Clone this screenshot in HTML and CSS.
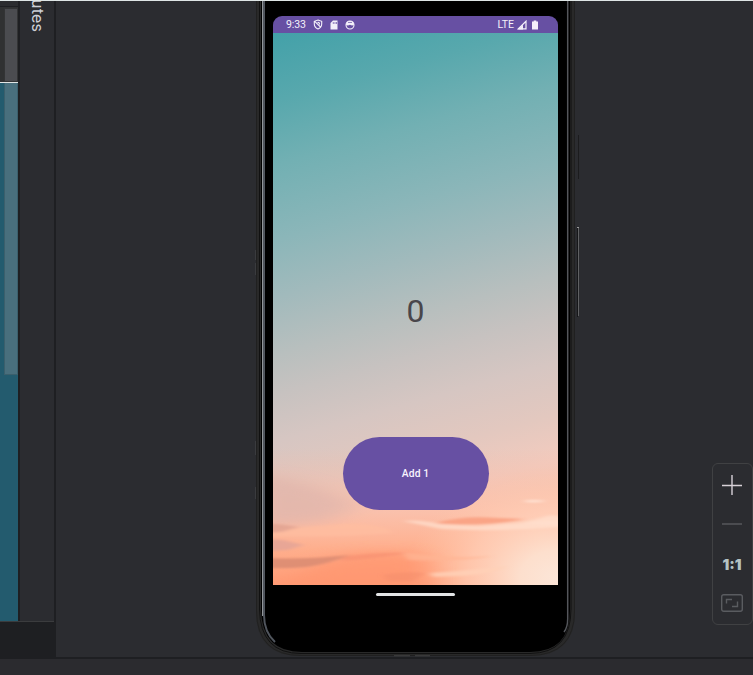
FILE: index.html
```html
<!DOCTYPE html>
<html lang="en">
<head>
<meta charset="utf-8">
<title>Layout preview</title>
<link rel="stylesheet" href="styles.css">
</head>
<body>
<div class="workspace">
  <aside class="side">
    <div class="side-panels">
      <div class="editor">
        <div class="scrollbar"></div>
      </div>
      <div class="tab-strip"><span class="tab-label">utes</span></div>
    </div>
    <div class="side-footer"></div>
  </aside>
  <main class="canvas">
    <section class="phone">
      <svg class="frame" width="328" height="658" viewBox="252 0 328 658" fill="none">
        <path d="M256 0V610Q256 655 301 655H530Q575 655 575 610V0Z" fill="#292929"/>
        <path d="M256.500 0V610Q257 654.500 301 654.500H530Q574.500 654 574.500 610V0" stroke="#202020"/>
        <path d="M259.500 0V608Q260 652.500 301 652.500H530Q571 652 571 608V0" stroke="#111"/>
        <path d="M261 0V609Q262 651 302 651H530Q570 651 570 609V0Z" fill="#000"/>
        <path d="M262.500 0V615" stroke="#92969a"/>
        <path d="M264 0V614Q264 631 275 641" stroke="#50555d" stroke-width="2"/>
        <path d="M567.700 0V616Q568 626 564 631" stroke="#54565b" stroke-width="1.500"/>
        <path d="M255.500 249V259M255.500 262V274M255.500 440V454M255.500 486V498" stroke="#3a3b3e"/>
        <path d="M578.500 134V178" stroke="#1c1c1e"/>
        <path d="M577.500 227V316" stroke="#161719"/>
        <path d="M578.500 226V315" stroke="#606163"/>
        <path d="M577 226.500H579" stroke="#999"/>
        <path d="M394 654.700H410M415 654.700H430" stroke="#555" stroke-width=".6"/>
      </svg>
      <div class="screen">
        <header class="status">
          <span class="clock">9:33</span>
          <svg class="shield" width="10" height="11" viewBox="0 0 10 11" fill="none" stroke="#f4f0fa" stroke-width="1.100"><path d="M5 1 8.700 2.300V5Q8.700 8.300 5 10Q1.300 8.300 1.300 5V2.300ZM1.500 2.200 8 8.500M4.500 3.500Q6.500 3 6.500 5.500"/></svg>
          <svg class="card" width="8" height="10" viewBox="0 0 8 10"><path d="M3 .5H7.500V9.500H.5V3Z" fill="#f4f0fa"/><path d="M3.300 2V4M5 2V4M6.500 2V4" stroke="#6750a3" stroke-width=".7"/></svg>
          <svg class="face" width="10" height="10" viewBox="0 0 10 10"><circle cx="5" cy="5" r="4" fill="none" stroke="#f4f0fa" stroke-width="1.100"/><path d="M1 5Q1 1 5 1T9 5L7 5.500 5 4.700 3 5.500Z" fill="#f4f0fa"/><path d="M3 2.500H7" stroke="#6750a3" stroke-width=".7"/></svg>
          <span class="network">LTE</span>
          <svg class="signal" width="10" height="10" viewBox="0 0 10 10"><path d="M9 1.200V8.900H1.200Z" fill="none" stroke="#f4f0fa" stroke-width="1.200"/><path d="M1 9.400 6 4.500V9.400Z" fill="#f4f0fa"/></svg>
          <svg width="6" height="10" viewBox="0 0 6 10"><path d="M0 1.500H1.700V.5H4.300V1.500H6V9.500H0Z" fill="#f4f0fa"/></svg>
        </header>
        <div class="app">
          <svg class="sky" width="285" height="552" viewBox="0 0 285 552" preserveAspectRatio="none">
            <defs>
              <linearGradient id="air" gradientUnits="userSpaceOnUse" x1="0" y1="0" x2="150" y2="534">
                <stop offset="0" stop-color="#43a1a9"/><stop offset=".12" stop-color="#58a8ad"/><stop offset=".23" stop-color="#72b0b3"/><stop offset=".36" stop-color="#8bb6b9"/><stop offset=".46" stop-color="#a1babc"/><stop offset=".56" stop-color="#b8bfbe"/><stop offset=".63" stop-color="#c7c2c0"/><stop offset=".71" stop-color="#d6c6c2"/><stop offset=".8" stop-color="#e3c8bf"/><stop offset=".88" stop-color="#f3cbbe"/><stop offset="1" stop-color="#ffcbb5"/>
              </linearGradient>
              <linearGradient id="dusk" x1="0" y1="0" x2="0" y2="1"><stop offset="0" stop-color="#eeb8a5" stop-opacity="0"/><stop offset=".45" stop-color="#fdbca4" stop-opacity=".65"/><stop offset=".75" stop-color="#ffac89" stop-opacity=".95"/><stop offset="1" stop-color="#ff9b75"/></linearGradient>
              <radialGradient id="glow" cx="1" cy=".95" r=".85"><stop offset="0" stop-color="#fce6d8"/><stop offset=".25" stop-color="#fddfcd"/><stop offset=".6" stop-color="#ffcfb8" stop-opacity=".75"/><stop offset="1" stop-color="#ffc5a8" stop-opacity="0"/></radialGradient>
              <filter id="soft" x="-20%" y="-20%" width="140%" height="140%"><feGaussianBlur stdDeviation="3 .9"/></filter>
              <filter id="haze" x="-30%" y="-50%" width="160%" height="200%"><feGaussianBlur stdDeviation="14 6"/></filter>
            </defs>
            <path d="M0 0H285V552H0Z" fill="url(#air)"/>
            <path d="M0 415H285V552H0Z" fill="url(#dusk)"/>
            <path d="M105 420H285V552H105Z" fill="url(#glow)"/>
            <path d="M-20 440Q50 450 85 474L50 489-20 494Z" fill="#dfb5ac" opacity=".75" filter="url(#haze)"/>
            <path d="M45 530Q100 512 155 525L155 560H0Z" fill="#ff9670" opacity=".75" filter="url(#haze)"/>
            <g filter="url(#soft)">
              <path d="M-8 497Q20 495 70 491Q110 490 120 500Q60 505 -8 503Z" fill="#ffbe9f" opacity=".7"/>
              <path d="M-8 490Q8 491 26 494L8 499-8 500Z" fill="#e2a392" opacity=".85"/>
              <path d="M-8 506 10 507 31 512 15 517-8 518Z" fill="#e4a596" opacity=".85"/>
              <path d="M-8 525Q30 527 77 522Q55 531 34 534Q12 536 -8 535Z" fill="#dd8d74" opacity=".95"/>
              <path d="M70 524Q105 519 137 520Q105 525 70 528Z" fill="#f79273" opacity=".8"/>
              <path d="M110 542Q130 538 152 540L140 548H115Z" fill="#f38e6b" opacity=".5"/>
              <path d="M163 490Q190 482 225 485L252 486Q220 493 163 491Z" fill="#faa284" opacity=".95"/>
              <path d="M130 488Q147 486 168 491L205 493 290 487V494Q220 499 168 496Z" fill="#ffdfce" opacity=".75"/>
              <path d="M248 490Q268 485 277 482L290 484V493Z" fill="#ffdfcd" opacity=".75"/>
              <path d="M250 468Q260 466 273 468Q265 470 254 469Z" fill="#ffe5d7"/>
              <path d="M157 540Q190 538 235 533Q220 543 160 544Z" fill="#ffd1b8" opacity=".8"/>
              <path d="M130 519Q175 526 220 523Q190 529 135 527Z" fill="#ffb594" opacity=".7"/>
            </g>
          </svg>
          <div class="count">0</div>
          <button class="add">Add 1</button>
        </div>
        <div class="home"></div>
      </div>
    </section>
    <nav class="zoom">
      <svg width="20" height="20" viewBox="0 0 20 20"><path d="M10 0V20M0 10.500H20" stroke="#d8d1d7" stroke-width="1.400"/></svg>
      <svg class="minus" width="20" height="2" viewBox="0 0 20 2"><path d="M0 1H20" stroke="#5d5f62" stroke-width="1.300"/></svg>
      <span class="ratio">1:1</span>
      <svg class="fit" width="22" height="18" viewBox="0 0 22 18" fill="none" stroke="#5a5c60" stroke-width="1.400"><rect x=".7" y=".7" width="20.600" height="16.600" rx="2"/><path d="M5.500 9.500V5.500H11M16.500 7.500V12.500H11"/></svg>
    </nav>
  </main>
</div>
<footer class="bottom"></footer>
</body>
</html>
```

FILE: styles.css
```css
* { box-sizing: border-box; }
body {
  margin: 0;
  width: 753px;
  height: 675px;
  overflow: hidden;
  background: #2b2c30;
  font-family: Roboto, "Liberation Sans", sans-serif;
}
svg { display: block; flex: none; }
.workspace {
  display: flex;
  height: 657px;
  border-top: 1px solid #dfe6e6;
}
.side {
  width: 56px;
  border-right: 2px solid #1e1f22;
  display: flex;
  flex-direction: column;
}
.side-panels {
  display: flex;
  height: 621px;
  border-bottom: 1px solid #3b3c3e;
}
.editor {
  width: 20px;
  padding: 7px 0 0 4px;
  border-right: 2px solid #1e1f22;
  background: linear-gradient(#2b2c2f 0 5px, #1e1f22 5px 6px, #303132 6px 81px, #e1e5e5 81px 82px, #235b6e 82px);
}
.scrollbar {
  height: 367px;
  padding: 1px;
  background: linear-gradient(#4b4c50, #4b4c50) 1px 1px / 12px 72px no-repeat,
    linear-gradient(#dfe4e4, #dfe4e4) 0 74px / 14px 1px no-repeat,
    linear-gradient(#496f7d, #496f7d) 1px 75px / 12px 291px no-repeat,
    linear-gradient(#333435 0 74px, #3b5f6c 74px);
}
.tab-strip { width: 34px; overflow: hidden; }
.tab-label {
  display: block;
  width: 34px;
  margin-top: -2px;
  writing-mode: vertical-rl;
  font: 16px/32px Inter, sans-serif;
  color: #ced0d6;
  letter-spacing: .2px;
}
.side-footer { width: 56px; flex: 1; background: #1e1f22; }
.canvas {
  flex: 1;
  display: flex;
  align-items: flex-start;
}
.phone {
  position: relative;
  margin-left: 196px;
  width: 328px;
  height: 656px;
  padding: 15px 22px 0 21px;
}
.frame { position: absolute; left: 0; top: 0; }
.screen { position: relative; width: 285px; }
.status {
  height: 17px;
  display: flex;
  align-items: center;
  padding: 0 20px 0 13px;
  border-radius: 9px 9px 0 0;
  background: #6750a3;
  color: #f4f0fa;
  font-size: 10.5px;
}
.clock { width: 27px; letter-spacing: -.1px; }
.card { margin-left: 7px; }
.face { margin-left: 7px; }
.network { margin-left: auto; }
.signal { margin: 0 5px 0 3px; }
.app {
  position: relative;
  height: 552px;
  display: flex;
  flex-direction: column;
  align-items: center;
  overflow: hidden;
}
.sky { position: absolute; left: 0; top: 0; }
.count {
  position: relative;
  margin-top: 256px;
  font-size: 32px;
  line-height: 44px;
  color: #49464b;
}
.add {
  position: relative;
  margin: 104px 0 0 0;
  width: 146px;
  height: 73px;
  padding: 0;
  border: 0;
  border-radius: 37px;
  background: #6750a3;
  color: #f8f4ff;
  font: 500 10.300px/73px Roboto, sans-serif;
  letter-spacing: .1px;
}
.home {
  width: 79px;
  height: 3px;
  margin: 8px auto 0 103px;
  border-radius: 2px;
  background: #e2e4e5;
}
.zoom {
  width: 41px;
  height: 162px;
  margin: 462px 0 0 132px;
  flex: none;
  border: 1px solid #404143;
  border-radius: 6px;
  display: flex;
  flex-direction: column;
  align-items: center;
  padding: 11px 1px 0 0;
}
.minus { margin-top: 28px; }
.ratio {
  margin-top: 29px;
  font: 900 15px/22px Inter, sans-serif;
  color: #b4c3c3;
}
.fit { margin-top: 18px; }
.bottom {
  height: 18px;
  border-top: 2px solid #1e1f22;
  background: #2b2b2f;
}
```
